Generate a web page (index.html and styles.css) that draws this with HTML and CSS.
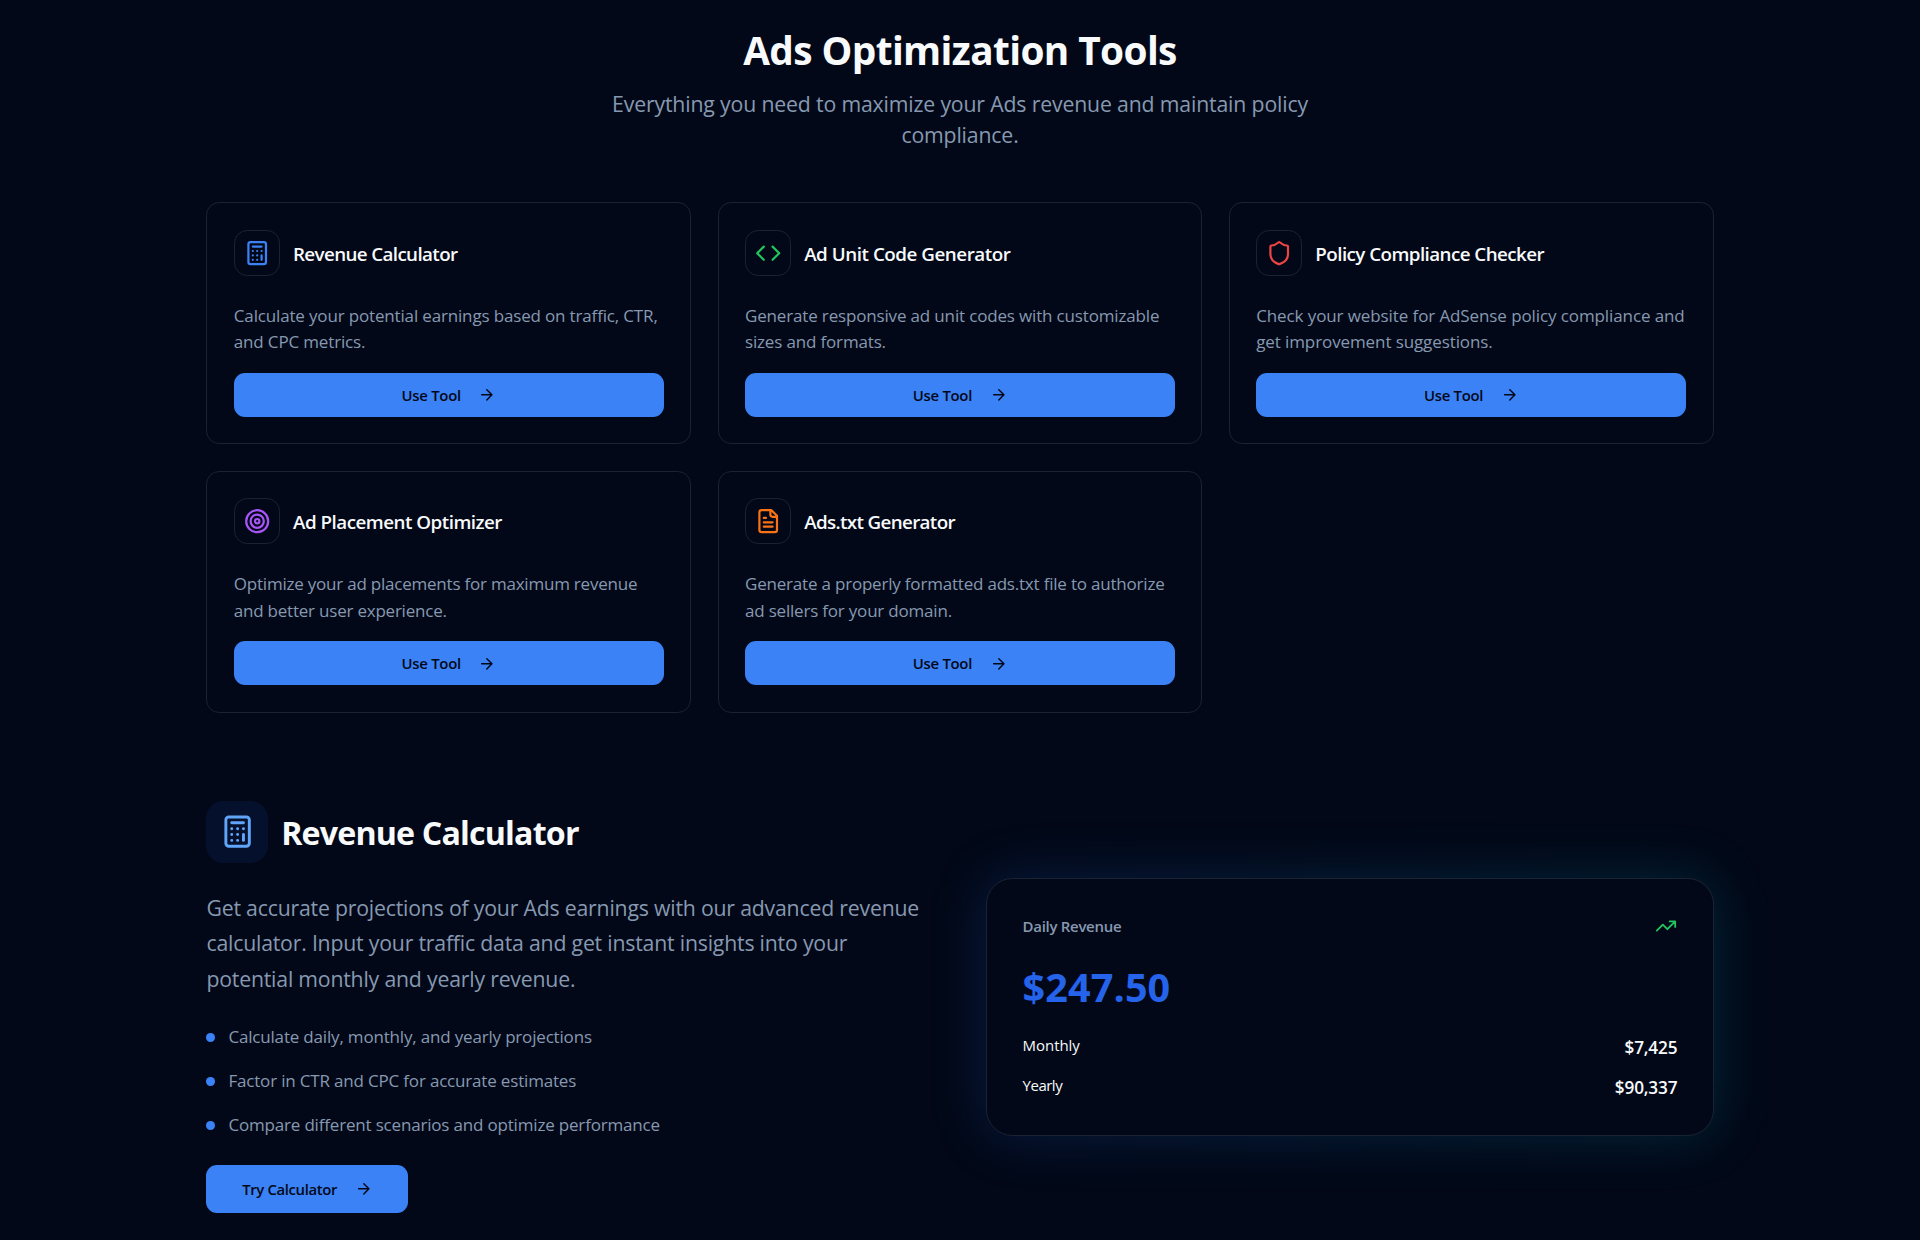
FILE: index.html
```html
<!DOCTYPE html>
<html lang="en">
<head>
<meta charset="utf-8">
<title>Ads Optimization Tools</title>
<link rel="stylesheet" href="styles.css">
</head>
<body>
<svg class="sprite" aria-hidden="true">
  <symbol id="i-calculator" viewBox="0 0 24 24"><rect width="16" height="20" x="4" y="2" rx="2"/><path d="M8 6h8M16 14v4M16 10h.01M12 10h.01M8 10h.01M12 14h.01M8 14h.01M12 18h.01M8 18h.01"/></symbol>
  <symbol id="i-code" viewBox="0 0 24 24"><path d="m16 18 6-6-6-6M8 6l-6 6 6 6"/></symbol>
  <symbol id="i-shield" viewBox="0 0 24 24"><path d="M20 13c0 5-3.5 7.5-7.66 8.95a1 1 0 0 1-.67-.01C7.5 20.5 4 18 4 13V6a1 1 0 0 1 1-1c2 0 4.5-1.2 6.24-2.72a1.17 1.17 0 0 1 1.52 0C14.51 3.81 17 5 19 5a1 1 0 0 1 1 1z"/></symbol>
  <symbol id="i-target" viewBox="0 0 24 24"><circle cx="12" cy="12" r="10"/><circle cx="12" cy="12" r="6"/><circle cx="12" cy="12" r="2"/></symbol>
  <symbol id="i-file" viewBox="0 0 24 24"><path d="M15 2H6a2 2 0 0 0-2 2v16a2 2 0 0 0 2 2h12a2 2 0 0 0 2-2V7ZM14 2v4a2 2 0 0 0 2 2h4M10 9H8M16 13H8M16 17H8"/></symbol>
  <symbol id="i-arrow" viewBox="0 0 24 24"><path d="M5 12h14M12 5l7 7-7 7"/></symbol>
  <symbol id="i-trend" viewBox="0 0 24 24"><path d="m22 7-8.5 8.5-5-5L2 17M16 7h6v6"/></symbol>
</svg>
<main class="page">
  <header class="intro">
    <h1 class="intro-title">Ads Optimization Tools</h1>
    <p class="intro-text">Everything you need to maximize your Ads revenue and maintain policy compliance.</p>
  </header>

  <section class="tools">
    <article class="tool tool-revenue">
      <div class="tool-head"><span class="tool-icon"><svg class="icon"><use href="#i-calculator"/></svg></span><h3 class="tool-title">Revenue Calculator</h3></div>
      <p class="tool-text">Calculate your potential earnings based on traffic, CTR,<br>and CPC metrics.</p>
      <button class="button">Use Tool<svg class="icon arrow"><use href="#i-arrow"/></svg></button>
    </article>
    <article class="tool tool-code">
      <div class="tool-head"><span class="tool-icon"><svg class="icon"><use href="#i-code"/></svg></span><h3 class="tool-title">Ad Unit Code Generator</h3></div>
      <p class="tool-text">Generate responsive ad unit codes with customizable<br>sizes and formats.</p>
      <button class="button">Use Tool<svg class="icon arrow"><use href="#i-arrow"/></svg></button>
    </article>
    <article class="tool tool-policy">
      <div class="tool-head"><span class="tool-icon"><svg class="icon"><use href="#i-shield"/></svg></span><h3 class="tool-title">Policy Compliance Checker</h3></div>
      <p class="tool-text">Check your website for AdSense policy compliance and<br>get improvement suggestions.</p>
      <button class="button">Use Tool<svg class="icon arrow"><use href="#i-arrow"/></svg></button>
    </article>
    <article class="tool tool-placement">
      <div class="tool-head"><span class="tool-icon"><svg class="icon"><use href="#i-target"/></svg></span><h3 class="tool-title">Ad Placement Optimizer</h3></div>
      <p class="tool-text">Optimize your ad placements for maximum revenue<br>and better user experience.</p>
      <button class="button">Use Tool<svg class="icon arrow"><use href="#i-arrow"/></svg></button>
    </article>
    <article class="tool tool-txt">
      <div class="tool-head"><span class="tool-icon"><svg class="icon"><use href="#i-file"/></svg></span><h3 class="tool-title">Ads.txt Generator</h3></div>
      <p class="tool-text">Generate a properly formatted ads.txt file to authorize<br>ad sellers for your domain.</p>
      <button class="button">Use Tool<svg class="icon arrow"><use href="#i-arrow"/></svg></button>
    </article>
  </section>

  <section class="feature">
    <div class="feature-copy">
      <div class="feature-head"><span class="feature-icon"><svg class="icon"><use href="#i-calculator"/></svg></span><h2 class="feature-title">Revenue Calculator</h2></div>
      <p class="feature-text">Get accurate projections of your Ads earnings with our advanced revenue<br>calculator. Input your traffic data and get instant insights into your<br>potential monthly and yearly revenue.</p>
      <ul class="points">
        <li class="point">Calculate daily, monthly, and yearly projections</li>
        <li class="point">Factor in CTR and CPC for accurate estimates</li>
        <li class="point">Compare different scenarios and optimize performance</li>
      </ul>
      <button class="button button-large">Try Calculator<svg class="icon arrow"><use href="#i-arrow"/></svg></button>
    </div>
    <div class="preview">
      <div class="glow"></div>
      <div class="revenue">
        <div class="revenue-head"><span class="revenue-label">Daily Revenue</span><svg class="icon trend"><use href="#i-trend"/></svg></div>
        <div class="amount">$247.50</div>
        <dl class="totals">
          <div class="total"><dt class="period period-month">Monthly</dt><dd class="value">$7,425</dd></div>
          <div class="total"><dt class="period">Yearly</dt><dd class="value">$90,337</dd></div>
        </dl>
      </div>
    </div>
  </section>
</main>
</body>
</html>
```
FILE: styles.css
```css
*, *::before, *::after { box-sizing: border-box; margin: 0; padding: 0; }

:root {
  --bg: #020817;
  --text: #f8fafc;
  --muted: #8799b1;
  --line: #1a2334;
  --primary: #3b82f6;
}

body {
  min-height: 1240px;
  overflow: hidden;
  background: var(--bg);
  color: var(--text);
  font-family: "Open Sans", "Noto Sans", sans-serif;
  font-size: 17px;
  line-height: 26.4px;
}

.sprite { display: none; }
.icon {
  width: 26.4px;
  height: 26.4px;
  flex: none;
  fill: none;
  stroke: currentColor;
  stroke-width: 2;
  stroke-linecap: round;
  stroke-linejoin: round;
}

.page { width: 1507.2px; margin: 0 auto; padding-top: 28px; }

.intro { margin-bottom: 51.8px; text-align: center; }
.intro-title { font-size: 38.8px; line-height: 44px; font-weight: 700; letter-spacing: -0.61px; }
.intro-text {
  width: 740px;
  margin: 17px auto 0;
  color: var(--muted);
  font-size: 21.25px;
  line-height: 30.8px;
  letter-spacing: -0.16px;
}

.tools { display: grid; grid-template-columns: repeat(3, 1fr); gap: 26.4px; }
.tool {
  display: flex;
  flex-direction: column;
  padding: 26.4px;
  border: 1px solid var(--line);
  border-radius: 13.2px;
}
.tool-head { display: flex; align-items: center; gap: 13.2px; margin-bottom: 27.3px; }
.tool-icon {
  display: flex;
  padding: 8.8px;
  border: 1px solid var(--line);
  border-radius: 13.2px;
}
.tool-title { padding-top: 1.6px; font-size: 18.8px; line-height: 26px; font-weight: 600; letter-spacing: -0.56px; }
.tool-text { margin-bottom: 17.1px; color: var(--muted); letter-spacing: -0.16px; }

.tool-revenue .tool-icon { color: #3b82f6; }
.tool-code .tool-icon { color: #22c55e; }
.tool-policy .tool-icon { color: #ef4444; }
.tool-placement .tool-icon { color: #a855f7; }
.tool-txt .tool-icon { color: #f97316; }
.tool-revenue .tool-title { letter-spacing: -0.62px; }
.tool-code .tool-title { letter-spacing: -0.46px; }
.tool-placement .tool-title { letter-spacing: -0.5px; }
.tool-txt .tool-title { letter-spacing: -0.64px; }
.tool-policy .tool-text { letter-spacing: -0.1px; }
.tool-placement .tool-text { letter-spacing: -0.22px; }
.tool-txt .tool-text { letter-spacing: -0.2px; }

.button {
  display: flex;
  align-items: center;
  justify-content: center;
  gap: 17.6px;
  height: 44px;
  border: 0;
  border-radius: 11px;
  background: var(--primary);
  color: #020817;
  font: 600 14.9px/22px "Open Sans", "Noto Sans", sans-serif;
  letter-spacing: -0.28px;
}
.button-large { width: 201.6px; height: 48.4px; letter-spacing: -0.36px; }
.arrow { width: 17.6px; height: 17.6px; }

.feature {
  display: grid;
  grid-template-columns: 1fr 1fr;
  align-items: center;
  gap: 52.8px;
  margin-top: 88.4px;
}
.feature-head { display: flex; align-items: center; gap: 13.2px; margin-bottom: 27px; }
.feature-icon {
  display: flex;
  padding: 13.2px;
  border-radius: 17.6px;
  background: rgba(37, 99, 235, 0.1);
  color: #60a5fa;
}
.feature-icon .icon { width: 35.2px; height: 35.2px; }
.feature-title { padding-top: 3px; font-size: 32.2px; line-height: 40px; font-weight: 700; letter-spacing: -0.83px; }
.feature-text {
  margin-bottom: 27px;
  color: var(--muted);
  font-size: 21.25px;
  line-height: 35.75px;
  letter-spacing: -0.2px;
}
.points { display: grid; gap: 17.6px; margin-bottom: 26.4px; list-style: none; }
.point { display: flex; align-items: center; gap: 13.2px; color: var(--muted); letter-spacing: -0.18px; }
.point::before { content: ""; width: 8.8px; height: 8.8px; border-radius: 50%; background: var(--primary); }

.preview { position: relative; }
.glow {
  position: absolute;
  inset: 0;
  border-radius: 26.4px;
  background: linear-gradient(to right, rgba(37, 99, 235, 0.2), rgba(6, 182, 212, 0.18));
  filter: blur(26.4px);
}
.revenue {
  position: relative;
  padding: 35.2px;
  border: 1px solid #1a2334;
  border-radius: 26.4px;
  background: var(--bg);
}
.revenue-head { display: flex; align-items: center; justify-content: space-between; height: 23px; margin-bottom: 27.6px; }
.revenue-label { color: var(--muted); font-size: 15px; line-height: 22px; font-weight: 600; letter-spacing: -0.3px; }
.trend { width: 22px; height: 22px; color: #22c55e; }
.amount { margin-bottom: 25.2px; color: #2563eb; font-size: 39.6px; line-height: 44px; font-weight: 700; letter-spacing: 0.1px; }
.totals { display: grid; gap: 13.2px; }
.total { display: flex; justify-content: space-between; }
.period { font-size: 15px; line-height: 22px; font-weight: 500; letter-spacing: -0.5px; }
.period-month { letter-spacing: -0.05px; }
.value { padding-top: 1px; font-size: 17.2px; line-height: 25.4px; font-weight: 600; letter-spacing: -0.15px; }
```
